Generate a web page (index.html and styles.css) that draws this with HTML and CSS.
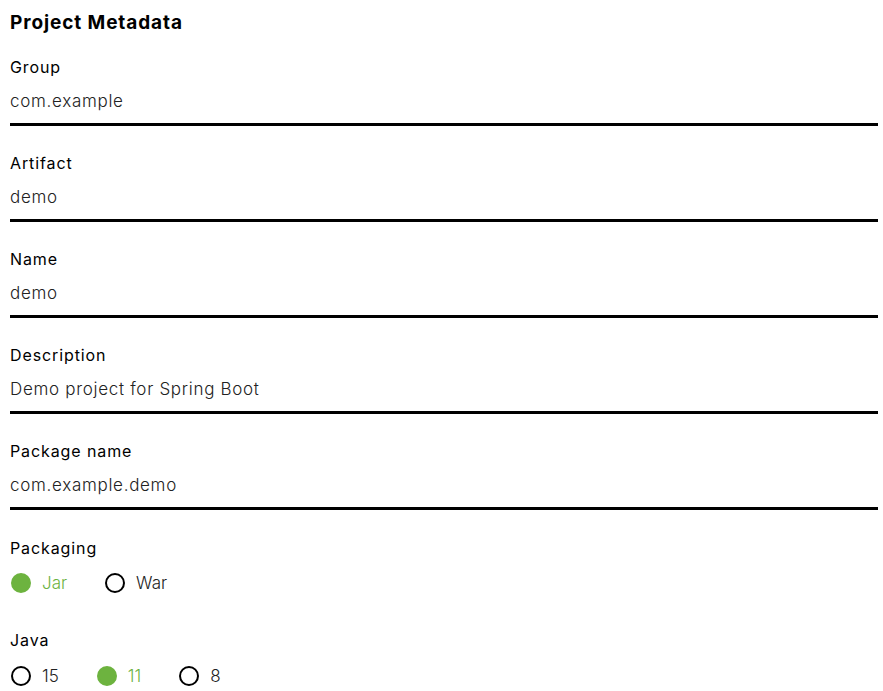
FILE: index.html
```html
<!DOCTYPE html>
<html>
<head>
<meta charset="utf-8">
<link rel="stylesheet" href="styles.css">
</head>
<body>
<div class="panel">
  <h2 class="title">Project Metadata</h2>
  <div class="field">
    <label class="label">Group</label>
    <div class="input">com.example</div>
  </div>
  <div class="field">
    <label class="label">Artifact</label>
    <div class="input">demo</div>
  </div>
  <div class="field">
    <label class="label">Name</label>
    <div class="input">demo</div>
  </div>
  <div class="field">
    <label class="label">Description</label>
    <div class="input">Demo project for Spring Boot</div>
  </div>
  <div class="field">
    <label class="label">Package name</label>
    <div class="input">com.example.demo</div>
  </div>
  <div class="group">
    <label class="label">Packaging</label>
    <div class="radios">
      <span class="radio checked"><span class="dot"></span>Jar</span>
      <span class="radio"><span class="dot"></span>War</span>
    </div>
  </div>
  <div class="group java">
    <label class="label">Java</label>
    <div class="radios">
      <span class="radio"><span class="dot"></span>15</span>
      <span class="radio checked"><span class="dot"></span>11</span>
      <span class="radio"><span class="dot"></span>8</span>
    </div>
  </div>
</div>
</body>
</html>
```
FILE: styles.css
```css
html, body {
  margin: 0;
  padding: 0;
  background: #fff;
}
body {
  font-family: Inter, "Noto Sans", sans-serif;
  color: #000;
}
.panel {
  padding: 10px 5px 0 10px;
}
.title {
  margin: 0;
  font-size: 19px;
  line-height: 26px;
  font-weight: 700;
  letter-spacing: 0.9px;
  color: #000;
}
.field {
  margin-top: 21px;
}
.field + .field {
  margin-top: 27px;
}
.label {
  display: block;
  font-size: 16px;
  line-height: 20px;
  font-weight: 400;
  letter-spacing: 0.9px;
  color: #000;
}
.input {
  margin-top: 12px;
  font-size: 17px;
  line-height: 24px;
  font-weight: 300;
  letter-spacing: 0.7px;
  color: #222;
  padding-bottom: 10px;
  border-bottom: 3px solid #000;
}
.group {
  margin-top: 28px;
}
.group.java {
  margin-top: 37px;
}
.radios {
  display: flex;
  align-items: center;
  margin-top: 15px;
  height: 20px;
}
.group.java .radios {
  margin-top: 16px;
}
.radio {
  display: inline-flex;
  align-items: center;
  font-size: 17px;
  font-weight: 300;
  color: #222;
  margin-right: 37px;
}
.dot {
  width: 16px;
  height: 16px;
  border: 2px solid #000;
  border-radius: 50%;
  margin: 0 11px 0 1px;
  box-sizing: content-box;
}
.radio.checked {
  color: #6db33f;
}
.radio.checked .dot {
  background: #6db33f;
  border-color: #6db33f;
}
```
